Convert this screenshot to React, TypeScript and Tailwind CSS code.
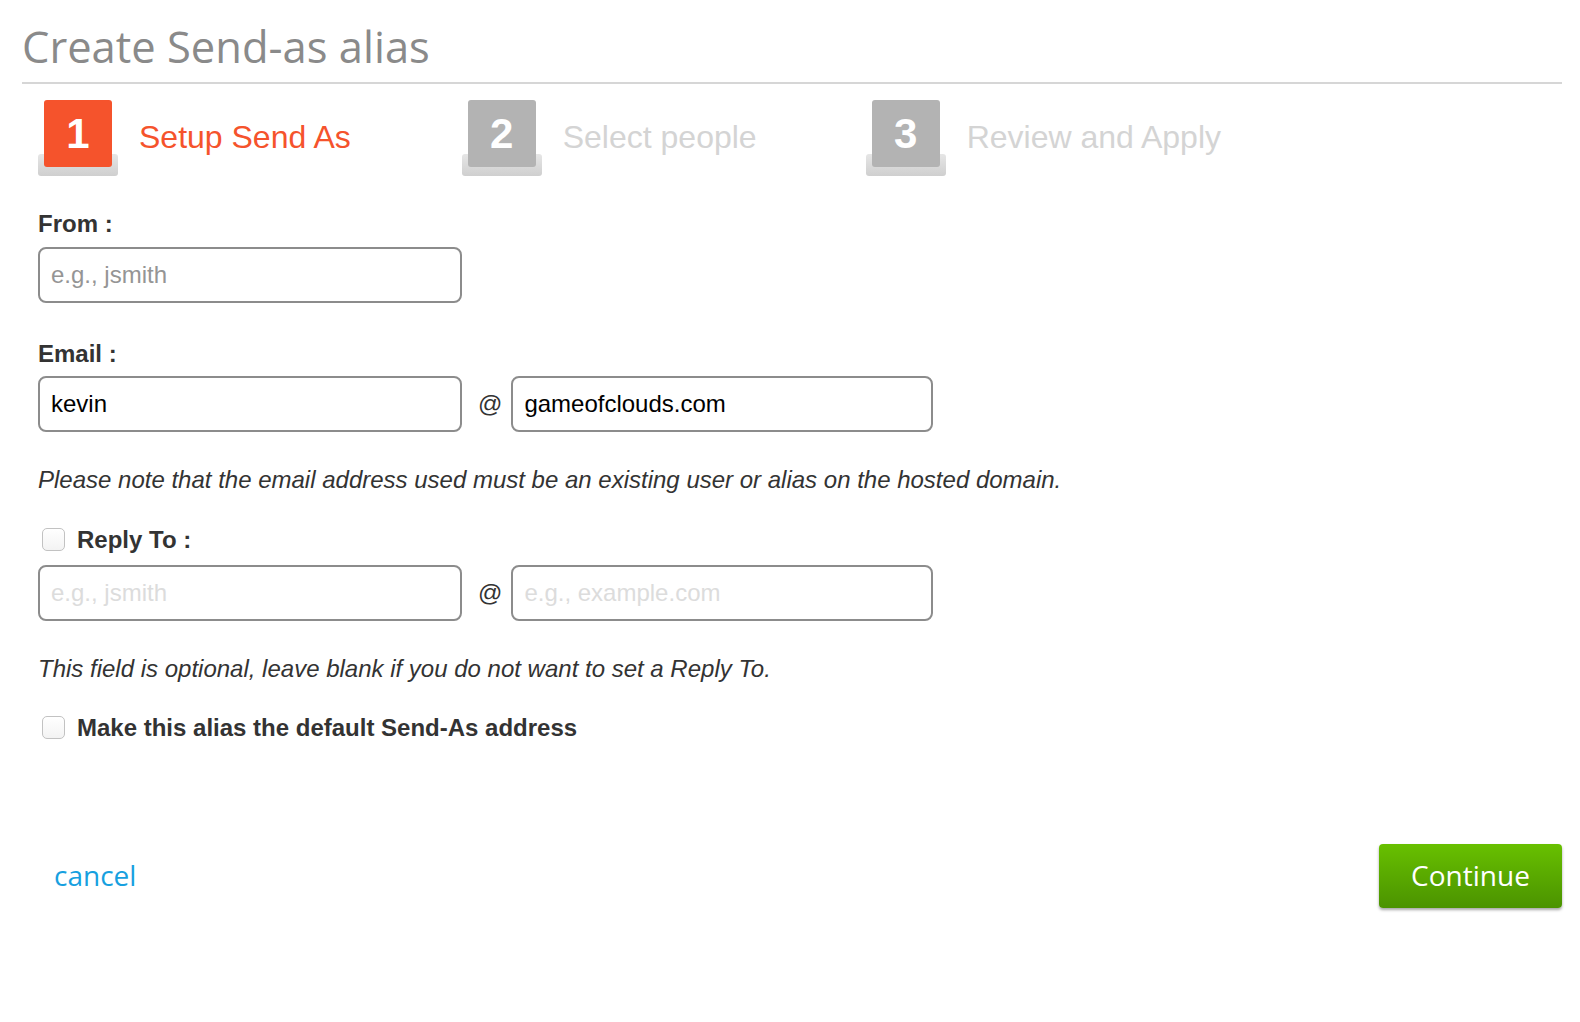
import React from "react";

const sans = "font-['Liberation_Sans',Arial,sans-serif]";
const open = "font-['Open_Sans',sans-serif]";

const steps = [
  { n: "1", label: "Setup Send As", active: true, gap: "mr-[111px]" },
  { n: "2", label: "Select people", active: false, gap: "mr-[109px]" },
  { n: "3", label: "Review and Apply", active: false, gap: "" },
];

function StepBadge({ n, active }: { n: string; active: boolean }) {
  return (
    <div className="relative h-[76px] w-[80px] shrink-0">
      {/* base plate */}
      <div className="absolute bottom-0 left-0 h-[22px] w-[80px] rounded-[3px] bg-gradient-to-b from-[#e6e6e6] to-[#cfcfcf]" />
      <div
        className={
          "absolute left-[6px] top-0 flex h-[67px] w-[68px] items-center justify-center rounded-[3px] text-[42px] font-bold text-white " +
          sans +
          (active ? " bg-[#f5532c]" : " bg-[#b3b3b3]")
        }
      >
        {n}
      </div>
    </div>
  );
}

function Checkbox() {
  return (
    <span className="block h-[23px] w-[23px] shrink-0 rounded-[5px] border border-[#c2c2c2] bg-gradient-to-b from-white to-[#f3f3f3]" />
  );
}

function TextBox({
  value,
  placeholder,
  width,
  disabled,
}: {
  value?: string;
  placeholder?: string;
  width: string;
  disabled?: boolean;
}) {
  return (
    <div
      className={
        "flex h-[56px] items-center rounded-[8px] border-2 border-[#8c8c8c] bg-white px-[11px] text-[24px] " +
        width +
        " " +
        sans
      }
    >
      {value ? (
        <span className="text-black">{value}</span>
      ) : (
        <span className={disabled ? "text-[#dcdcdc]" : "text-[#959595]"}>{placeholder}</span>
      )}
    </div>
  );
}

function At() {
  return <span className={"ml-[16px] mr-[9px] text-[24px] text-[#333] " + sans}>@</span>;
}

export default function App() {
  return (
    <div className="min-h-[1022px] w-[1580px] bg-white pl-[22px] pr-[18px] pt-[25px]">
      <h1 className={"text-[43.5px] leading-none text-[#8a8a8a] " + open}>Create Send-as alias</h1>
      <div className="mt-[13px] h-[2px] bg-[#d6d6d6]" />

      {/* steps */}
      <div className="mt-[16px] flex items-start pl-[16px]">
        {steps.map((s) => (
          <div key={s.n} className={"flex items-center " + s.gap}>
            <StepBadge n={s.n} active={s.active} />
            <span
              className={
                "-mt-[2px] ml-[21px] text-[32px] " +
                sans +
                (s.active ? " text-[#f5532c]" : " text-[#d4d4d4]")
              }
            >
              {s.label}
            </span>
          </div>
        ))}
      </div>

      {/* form */}
      <div className={"pl-[16px] text-[#333] " + sans}>
        <div className="mt-[34px] text-[24px] font-bold leading-[28px]">From :</div>
        <div className="mt-[9px]">
          <TextBox placeholder="e.g., jsmith" width="w-[424px]" />
        </div>

        <div className="mt-[37px] text-[24px] font-bold leading-[28px]">Email :</div>
        <div className="mt-[8px] flex items-center">
          <TextBox value="kevin" width="w-[424px]" />
          <At />
          <TextBox value="gameofclouds.com" width="w-[422px]" />
        </div>

        <p className="mt-[34px] text-[24px] italic leading-[28px]">
          Please note that the email address used must be an existing user or alias on the hosted domain.
        </p>

        <div className="mt-[32px] flex items-center pl-[4px]">
          <Checkbox />
          <span className="ml-[12px] text-[24px] font-bold leading-[28px]">Reply To :</span>
        </div>
        <div className="mt-[11px] flex items-center">
          <TextBox placeholder="e.g., jsmith" width="w-[424px]" disabled />
          <At />
          <TextBox placeholder="e.g., example.com" width="w-[422px]" disabled />
        </div>

        <p className="mt-[34px] text-[24px] italic leading-[28px]">
          This field is optional, leave blank if you do not want to set a Reply To.
        </p>

        <div className="mt-[31px] flex items-center pl-[4px]">
          <Checkbox />
          <span className="ml-[12px] text-[24px] font-bold leading-[28px]">
            Make this alias the default Send-As address
          </span>
        </div>
      </div>

      {/* actions */}
      <div className="mt-[102px] flex items-center justify-between">
        <a className={"-mt-[2px] pl-[32px] text-[28px] text-[#17a0df] " + open}>cancel</a>
        <button
          className={
            "h-[64px] w-[183px] rounded-[4px] bg-gradient-to-b from-[#68c000] to-[#4b9300] pb-[2px] text-[28px] text-white shadow-[0_2px_3px_rgba(0,0,0,0.35)] " +
            open
          }
        >
          Continue
        </button>
      </div>
    </div>
  );
}
